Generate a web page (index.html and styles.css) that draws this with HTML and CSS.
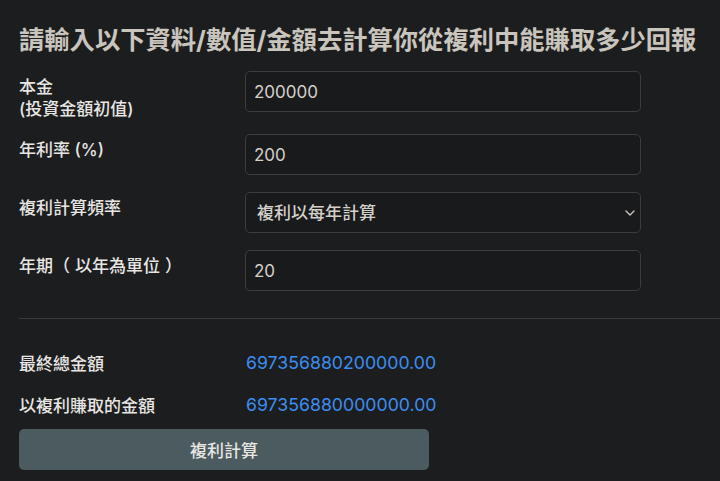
FILE: index.html
```html
<!DOCTYPE html>
<html lang="zh-Hant">
<head>
    <meta charset="UTF-8">
    <meta name="viewport" content="width=device-width, initial-scale=1.0">
    <title>複利計算機</title>
    <link rel="stylesheet" href="styles.css">
</head>
<body>
    <div class="calculator">
        <h2>請輸入以下資料/數值/金額去計算你從複利中能賺取多少回報</h2>

        <div class="field">
            <label for="principal">本金<br>(投資金額初值)</label>
            <input type="text" id="principal" value="200000">
        </div>
        <div class="field">
            <label for="rate">年利率 (%)</label>
            <input type="text" id="rate" value="200">
        </div>
        <div class="field">
            <label for="frequency">複利計算頻率</label>
            <div class="select-wrap">
                <select id="frequency">
                    <option>複利以每年計算</option>
                    <option>複利以每半年計算</option>
                    <option>複利以每季計算</option>
                    <option>複利以每月計算</option>
                </select>
                <svg class="chevron" width="10" height="6" viewBox="0 0 10 6"><path d="M1 1l4 4 4-4" fill="none" stroke="currentColor" stroke-width="1.4" stroke-linecap="round" stroke-linejoin="round"/></svg>
            </div>
        </div>
        <div class="field">
            <label for="years">年期<span class="paren-open">（</span>以年為單位<span class="paren-close">）</span></label>
            <input type="text" id="years" value="20">
        </div>

        <hr class="divider">

        <div class="result">
            <span class="result-label">最終總金額</span>
            <span class="result-value">697356880200000.00</span>
        </div>
        <div class="result">
            <span class="result-label">以複利賺取的金額</span>
            <span class="result-value">697356880000000.00</span>
        </div>

        <button type="button">複利計算</button>
    </div>
</body>
</html>
```

FILE: styles.css
```css
/* Dark theme colours */
:root {
    --bg: #1c1d1f;
    --input-bg: #191a1c;
    --border: #3b3d40;
    --title: #c9c4bc;
    --text: #e8e6e3;
    --input-text: #d4d0ca;
    --accent: #3d8ef0;
    --button-bg: #4b5b5f;
}

* {
    box-sizing: border-box;
    margin: 0;
    padding: 0;
}

body {
    font-family: Inter, "Noto Sans CJK TC", sans-serif;
    background: var(--bg);
    color: var(--text);
    overflow: hidden;
}

.calculator {
    padding: 22px 0 0 19px;
}

h2 {
    color: var(--title);
    font-size: 25.3px;
    font-weight: 700;
    line-height: 36px;
    white-space: nowrap;
    margin-bottom: 13px;
}

.field {
    display: flex;
    align-items: flex-start;
    margin-bottom: 17px;
}

.field:first-of-type {
    margin-bottom: 14px;
}

label {
    width: 226px;
    flex-shrink: 0;
    font-size: 17px;
    font-weight: 500;
    line-height: 22px;
    padding-top: 5px;
}

.paren-open {
    margin-right: 5px;
}

.paren-close {
    margin-left: 5px;
}

input,
select {
    width: 396px;
    height: 41px;
    background: var(--input-bg);
    border: 1px solid var(--border);
    border-radius: 5px;
    color: var(--input-text);
    font-family: inherit;
    font-size: 17px;
    padding: 0 8px;
    outline: none;
}

.select-wrap {
    position: relative;
}

select {
    appearance: none;
    -webkit-appearance: none;
    padding-left: 11px;
    font-weight: 500;
}

.chevron {
    position: absolute;
    right: 6px;
    top: 18px;
    color: #c8c4be;
    pointer-events: none;
}

.divider {
    border: none;
    border-top: 1px solid #3a3b3e;
    margin: 27px 0 22px;
}

.result {
    display: flex;
    align-items: center;
    height: 42px;
}

.result-label {
    width: 227px;
    font-size: 17px;
    font-weight: 500;
}

.result-value {
    color: var(--accent);
    font-size: 17.7px;
}

button {
    width: 410px;
    height: 41px;
    margin-top: 4px;
    background: var(--button-bg);
    color: var(--text);
    border: none;
    border-radius: 5px;
    font-family: inherit;
    font-size: 17px;
    font-weight: 500;
    cursor: pointer;
}
```
